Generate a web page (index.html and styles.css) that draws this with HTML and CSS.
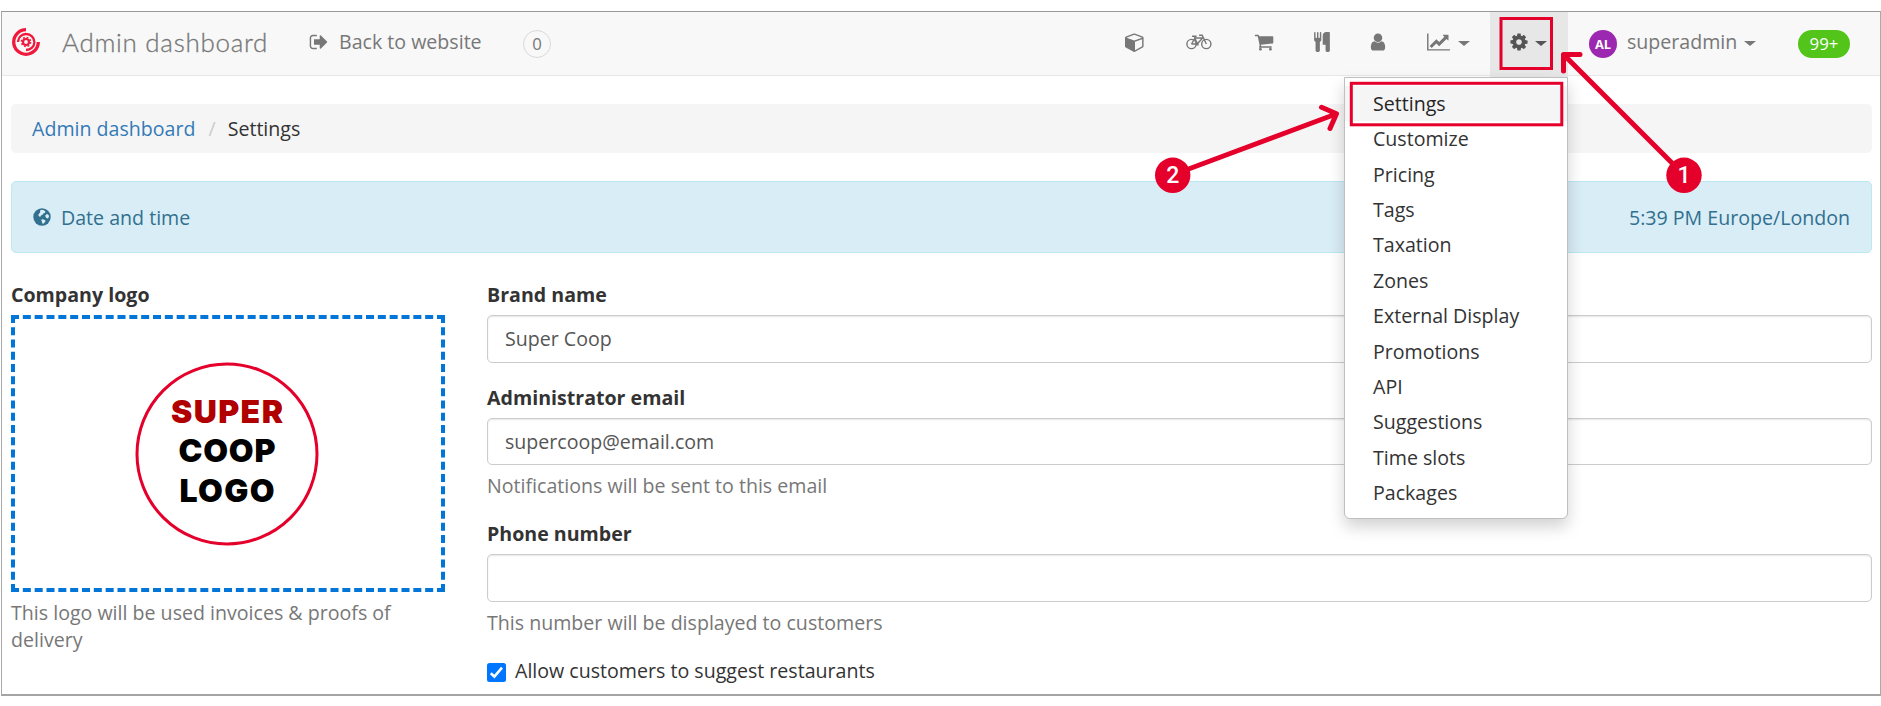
FILE: index.html
```html
<!DOCTYPE html>
<html lang="en">
<head>
<meta charset="utf-8">
<title>Admin dashboard - Settings</title>
<link rel="stylesheet" href="styles.css">
</head>
<body>
<div class="frame">
  <nav class="navbar">
    <svg class="brand-logo" viewBox="0 0 28 28" fill="none" stroke="#f0193c">
      <path d="M14 1.700A12.300 12.300 0 1 0 26.300 14" stroke-width="3.300"/>
      <path d="M6 14a8 8 0 0 1 8.200-8c4.400 0 8.200 3.600 8.200 8 0 4.500-3.600 8-8.400 8" stroke-width="2.300"/>
      <circle cx="14" cy="14" r="3" stroke-width="2.200"/>
      <circle cx="14" cy="14" r="4.600" stroke-width="1.500" stroke-dasharray="1.800 1.813"/>
    </svg>
    <span class="brand">Admin dashboard</span>
    <a class="back"><svg class="fa" viewBox="0 0 1792 1792"><path d="M704 1440q0 4 1 20t.5 26.500-3 23.500-10 19.500-20.500 6.500h-320q-119 0-203.500-84.500t-84.500-203.500v-704q0-119 84.500-203.500t203.500-84.500h320q13 0 22.500 9.500t9.500 22.500q0 4 1 20t.5 26.500-3 23.500-10 19.500-20.500 6.500h-320q-66 0-113 47t-47 113v704q0 66 47 113t113 47h312l11.500 1 11.500 3 8 5.500 7 9 2 13.500zm928-544q0 26-19 45l-544 544q-19 19-45 19t-45-19-19-45v-288h-448q-26 0-45-19t-19-45v-384q0-26 19-45t45-19h448v-288q0-26 19-45t45-19 45 19l544 544q19 19 19 45z"/></svg><span class="back-text">Back to website</span></a>
    <span class="counter">0</span>
    <div class="nav-right">
      <a class="item"><svg class="fa" viewBox="0 0 1792 1792"><path fill-rule="evenodd" d="M896 1629l640-349v-636l-640 233v752zM832 764l698-254-698-254-698 254zM1664 512v768q0 35-18 65t-49 47l-704 384q-28 16-61 16t-61-16l-704-384q-31-17-49-47t-18-65v-768q0-40 23-73t61-47l704-256q22-8 44-8t44 8l704 256q38 14 61 47t23 73z"/></svg></a>
      <a class="item"><svg class="bike" viewBox="0 0 26 16" fill="none" stroke="#777" stroke-width="1.400"><circle cx="5.500" cy="10" r="4.600"/><circle cx="20.300" cy="10" r="4.600"/><path d="M5.500 10 9 4h7.600l-5.400 6H5.500M8.200 2.300l3.200 7.700M6 2.200h4.600M20.300 10 16.200 1.200h-3.100"/><path d="M9.600 10.500h3" stroke-width="2"/></svg></a>
      <a class="item"><svg class="fa" viewBox="0 0 1792 1792"><path d="M704 1536q0 52-38 90t-90 38-90-38-38-90 38-90 90-38 90 38 38 90zm896 0q0 52-38 90t-90 38-90-38-38-90 38-90 90-38 90 38 38 90zm128-1088v512q0 24-16.500 42.500t-40.500 21.500l-1044 122q13 60 13 70 0 16-24 64h920q26 0 45 19t19 45-19 45-45 19h-1024q-26 0-45-19t-19-45q0-11 8-31.500t16-36 21.500-40 15.500-29.500l-177-823h-204q-26 0-45-19t-19-45 19-45 45-19h256q16 0 28.500 6.500t19.500 15.500 13 24.500 8 26 5.500 29.500 4.500 26h1201q26 0 45 19t19 45z"/></svg></a>
      <a class="item"><svg class="fa" viewBox="0 0 1792 1792"><path d="M832 64v640q0 61-35.500 111t-92.500 70v779q0 52-38 90t-90 38h-128q-52 0-90-38t-38-90v-779q-57-20-92.500-70t-35.500-111v-640q0-26 19-45t45-19 45 19 19 45v416q0 26 19 45t45 19 45-19 19-45v-416q0-26 19-45t45-19 45 19 19 45v416q0 26 19 45t45 19 45-19 19-45v-416q0-26 19-45t45-19 45 19 19 45zm768 0v1600q0 52-38 90t-90 38h-128q-52 0-90-38t-38-90v-512h-224q-13 0-22.500-9.500t-9.500-22.500v-800q0-132 94-226t226-94h256q26 0 45 19t19 45z"/></svg></a>
      <a class="item"><svg class="fa" viewBox="0 0 1792 1792"><path d="M1536 1399q0 109-62.500 187t-150.500 78h-854q-88 0-150.500-78t-62.500-187q0-85 8.500-160.500t31.500-152 58.500-131 94-89 134.500-34.500q131 128 313 128t313-128q76 0 134.500 34.500t94 89 58.500 131 31.500 152 8.500 160.500zm-256-887q0 159-112.500 271.500t-271.500 112.500-271.500-112.500-112.500-271.500 112.500-271.500 271.500-112.500 271.500 112.500 112.500 271.500z"/></svg></a>
      <a class="item"><svg class="chart" viewBox="0 0 2048 1792"><path d="M2048 1536v128h-2048v-1536h128v1408h1920zm-128-1248v435q0 21-19.500 29.500t-35.500-7.500l-121-121-633 633q-10 10-23 10t-23-10l-233-233-416 416-192-192 585-585q10-10 23-10t23 10l233 233 464-464-121-121q-16-16-7.500-35.500t29.500-19.500h435q14 0 23 9t9 23z"/></svg><i class="caret"></i></a>
      <a class="item open"><svg class="fa" viewBox="0 0 1792 1792"><path d="M1152 896q0-106-75-181t-181-75-181 75-75 181 75 181 181 75 181-75 75-181zm512-109v222q0 12-8 23t-20 13l-185 28q-19 54-39 91 35 50 107 138 10 12 10 25t-9 23q-27 37-99 108t-94 71q-12 0-26-9l-138-108q-44 23-91 38-16 136-29 186-7 28-36 28h-222q-14 0-24.500-8.500t-11.500-21.500l-28-184q-49-16-90-37l-141 107q-10 9-25 9-14 0-25-11-126-114-165-168-7-10-7-23 0-12 8-23 15-21 51-66.500t54-70.500q-27-50-41-99l-183-27q-13-2-21-12.500t-8-23.500v-222q0-12 8-23t19-13l186-28q14-46 39-92-40-57-107-138-10-12-10-24 0-10 9-23 26-36 98.500-107.500t94.500-71.500q13 0 26 10l138 107q44-23 91-38 16-136 29-186 7-28 36-28h222q14 0 24.500 8.500t11.500 21.500l28 184q49 16 90 37l142-107q9-9 24-9 13 0 25 10 129 119 165 170 7 8 7 22 0 12-8 23-15 21-51 66.500t-54 70.500q26 50 41 98l183 28q13 2 21 12.500t8 23.500z"/></svg><i class="caret"></i></a>
      <a class="account"><span class="avatar">AL</span><span class="username">superadmin</span><i class="caret"></i></a>
      <span class="pill">99+</span>
    </div>
  </nav>

  <ul class="menu">
    <li class="active">Settings</li>
    <li>Customize</li>
    <li>Pricing</li>
    <li>Tags</li>
    <li>Taxation</li>
    <li>Zones</li>
    <li>External Display</li>
    <li>Promotions</li>
    <li>API</li>
    <li>Suggestions</li>
    <li>Time slots</li>
    <li>Packages</li>
  </ul>

  <main class="content">
    <div class="breadcrumb"><a>Admin dashboard</a><span class="slash">/</span><span>Settings</span></div>
    <div class="alert">
      <svg class="globe" viewBox="0 0 18 18"><circle cx="9" cy="9" r="8.700" fill="#31708f"/><path fill="#d9edf7" d="M7.200 2.200 9 1.700l2 .6 1.500 1.500-.7 1.200-1.600.4-.6 1.300-1.700.9-.5 1.200-1.300-.4-.8-1.400.9-1.500.9-.9zM12.300 7.200l1.700-1.300 1.700 1 .3 2-1.200 1.600-1.500-.5-.9-1.400zM8.800 11.200l2 .2 1.900 1.300-.9 1.600-1.400 1.500-1.100-.4-.4-1.900-.7-1z"/></svg>
      <span>Date and time</span>
      <span class="clock">5:39 PM Europe/London</span>
    </div>
    <div class="columns">
      <section class="logo-col">
        <div class="label">Company logo</div>
        <div class="dropzone">
          <svg class="logo" viewBox="0 0 184 184">
            <circle cx="92" cy="92" r="90" fill="none" stroke="#e4002b" stroke-width="3"/>
            <g class="logo-text">
              <text x="92" y="61" textLength="112" fill="#b00000">SUPER</text>
              <text x="92" y="100" textLength="97">COOP</text>
              <text x="92" y="140" textLength="95">LOGO</text>
            </g>
          </svg>
        </div>
        <p class="help">This logo will be used invoices &amp; proofs of delivery</p>
      </section>
      <section class="form-col">
        <div class="group">
          <div class="label">Brand name</div>
          <div class="input">Super Coop</div>
        </div>
        <div class="group">
          <div class="label">Administrator email</div>
          <div class="input">supercoop@email.com</div>
          <p class="help">Notifications will be sent to this email</p>
        </div>
        <div class="group">
          <div class="label">Phone number</div>
          <div class="input"></div>
          <p class="help">This number will be displayed to customers</p>
        </div>
        <div class="check"><svg viewBox="0 0 19 19"><rect width="19" height="19" rx="2.500" fill="#0075ff"/><path d="M3.800 10.200 7.400 13.700 15 4.600" fill="none" stroke="#fff" stroke-width="2.600"/></svg><span>Allow customers to suggest restaurants</span></div>
      </section>
    </div>
  </main>
</div>
<svg class="annotations" viewBox="0 0 1881 706" fill="none" stroke="#e4002b">
  <rect x="1501" y="18.500" width="50.500" height="50" stroke-width="3"/>
  <rect x="1351.300" y="83.300" width="210.500" height="41.500" stroke-width="3"/>
  <g stroke-width="5" stroke-linecap="round" stroke-linejoin="round">
    <path d="M1684 175 1565 56M1563.500 71V54.500H1580"/>
    <path d="M1172.500 175 1336 114M1321.500 107.300 1336.500 113.800 1330 128.500"/>
  </g>
  <g stroke="none">
    <circle cx="1684" cy="175.300" r="17.700" fill="#e4002b"/>
    <circle cx="1172.700" cy="175.300" r="17.700" fill="#e4002b"/>
    <text class="step" x="1684" y="183">1</text>
    <text class="step" x="1172.700" y="183">2</text>
  </g>
</svg>
</body>
</html>
```
FILE: styles.css
```css
* { box-sizing: border-box; }
body {
  margin: 0;
  background: #fff;
  color: #333;
  font-family: "Open Sans", sans-serif;
  font-size: 19.6px;
  line-height: 27px;
}
.frame {
  position: relative;
  width: 1880px;
  height: 685px;
  margin: 11px 0 0 1px;
  border: 1px solid #aaa;
  border-top-color: #999;
  border-bottom: 2px solid #a4a4a4;
}
.navbar {
  display: flex;
  height: 64px;
  padding-left: 10px;
  background: #f8f8f8;
  border-bottom: 1px solid #e7e7e7;
  color: #777;
}
.brand-logo { width: 28px; height: 28px; margin-top: 16px; }
.brand {
  margin: 14px 0 0 22px;
  width: 206px;
  font-family: Lato, sans-serif;
  font-size: 26px;
  font-weight: 300;
  letter-spacing: 0.7px;
  line-height: 32px;
  white-space: nowrap;
  -webkit-text-stroke: 0.3px #777;
}
.back { display: flex; margin: 16px 0 0 41px; width: 173px; white-space: nowrap; }
.back .fa { margin-top: 4px; }
.back-text { margin-left: 10px; }
.fa { width: 20px; height: 20px; fill: currentColor; flex: none; }
.bike { width: 26px; height: 16px; }
.chart { width: 23px; height: 20px; fill: currentColor; }
.counter {
  width: 28px;
  height: 28px;
  margin: 18px 0 0 41px;
  border: 1px solid #d9d9d9;
  border-radius: 50%;
  font-size: 16.8px;
  line-height: 26px;
  text-align: center;
}
.nav-right {
  display: grid;
  grid-template-columns: 63px 66px 63px 54px 58px 83px 78px 209px 103px;
  margin-left: auto;
}
.item { display: flex; align-items: center; justify-content: center; height: 64px; padding-bottom: 4px; }
.caret {
  border: 6px solid transparent;
  border-top: 5.5px solid currentColor;
  border-bottom: 0;
  margin: 3px 0 0 8px;
}
.item.open { height: 65px; padding-bottom: 5px; background: #e7e7e7; color: #555; padding-right: 2px; }
.open .caret { margin-left: 6px; }
.account { display: flex; padding: 16px 0 0 21px; }
.avatar {
  width: 28px;
  height: 28px;
  margin: 2px 10px 0 0;
  border-radius: 50%;
  background: #9c27b0;
  color: #fff;
  font-size: 12.8px;
  font-weight: 700;
  line-height: 28px;
  text-align: center;
}
.account .caret { margin: 13px 0 0 7px; height: 6px; }
.pill {
  width: 52px;
  height: 28px;
  margin: 18px 0 0 21px;
  border-radius: 14px;
  background: #52c41a;
  color: #fff;
  font-size: 16.8px;
  line-height: 28px;
  text-align: center;
}
.menu {
  position: absolute;
  z-index: 2;
  left: 1342px;
  top: 65px;
  width: 224px;
  height: 442px;
  margin: 0;
  padding: 7.85px 0;
  list-style: none;
  background: #fff;
  border: 1px solid #bfbfbf;
  border-radius: 0 0 6px 6px;
  box-shadow: 0 8px 16px rgba(0, 0, 0, 0.175);
}
.menu li { height: 35.4px; padding-left: 28px; line-height: 35.4px; }
.menu .active { background: #f5f5f5; color: #262626; }
.content { padding: 28px 8px 0 9px; }
.breadcrumb {
  display: flex;
  height: 49px;
  padding-left: 21px;
  border-radius: 5px;
  background: #f5f5f5;
  line-height: 49px;
}
.breadcrumb a { color: #337ab7; }
.slash { margin: 0 12px 0 13px; color: #ccc; }
.alert {
  display: flex;
  align-items: center;
  height: 72px;
  margin-top: 28px;
  padding: 0 21px;
  border: 1px solid #bce8f1;
  border-radius: 5px;
  background: #d9edf7;
  color: #31708f;
}
.globe { width: 18px; height: 18px; margin-right: 10px; }
.clock { margin-left: auto; }
.columns { display: flex; gap: 42px; margin-top: 28px; }
.logo-col { width: 434px; }
.form-col { flex: 1; }
.label { height: 34px; font-weight: 700; }
.dropzone {
  display: flex;
  align-items: center;
  justify-content: center;
  height: 277px;
  padding-right: 2px;
  border: 4px dashed #0275d8;
}
.logo { width: 184px; height: 184px; }
.logo-text { font: 900 32px Inter, sans-serif; text-anchor: middle; }
.help { margin: 7px 0 0; color: #777; }
.input {
  height: 47.6px;
  padding-left: 17px;
  border: 1px solid #ccc;
  border-radius: 5px;
  box-shadow: inset 0 1px 2px rgba(0, 0, 0, 0.1);
  color: #555;
  line-height: 45px;
}
.group { margin-bottom: 21px; }
.check { display: flex; }
.check svg { width: 19px; height: 19px; margin: 6px 9px 0 0; }
.annotations { position: absolute; z-index: 3; left: 0; top: 0; width: 1881px; height: 706px; }
.step { font: 500 23px Roboto, sans-serif; fill: #fff; text-anchor: middle; }
```
